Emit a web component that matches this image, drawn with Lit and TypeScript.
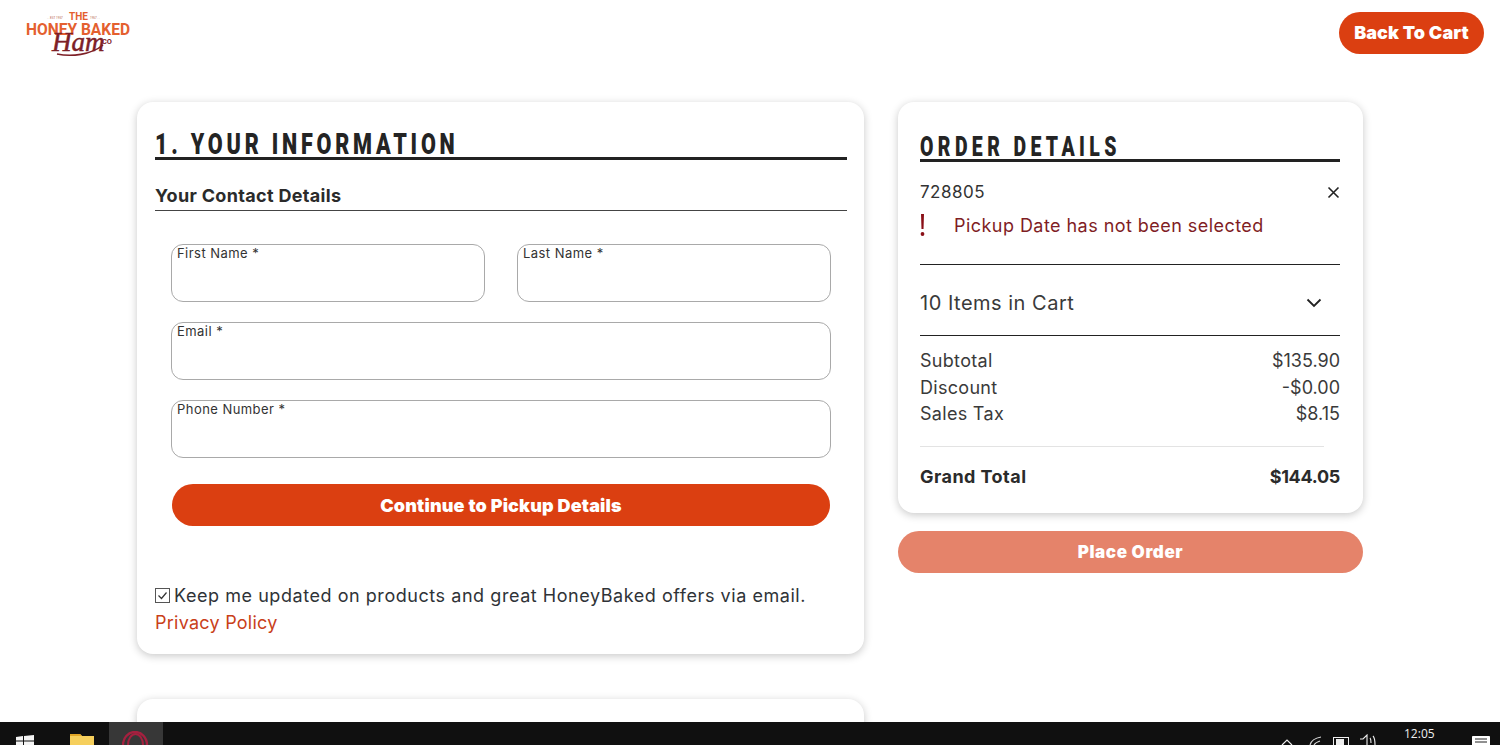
import { LitElement, html, css } from "lit";
import { customElement } from "lit/decorators.js";

@customElement("app-root")
export class AppRoot extends LitElement {
  static styles = css`
    :host { display: flex; flex-direction: column; width: 1500px; height: 745px; overflow: hidden; background: #fff; font-family: Inter, "Liberation Sans", sans-serif; color: #2b2b2b; }
    * { box-sizing: border-box; }
    .page { flex: 1; min-height: 0; overflow: hidden; }
    header { height: 102px; display: flex; justify-content: space-between; align-items: flex-start; padding: 12px 16px 0 25px; }
    .logo { width: 106px; height: 46px; display: block; overflow: visible; }
    .logo text { font-family: Roboto, "Liberation Sans", sans-serif; font-weight: 700; fill: #e4602f; }
    .logo .ham { font-family: "Liberation Serif", serif; font-style: italic; fill: #7d2027; stroke: #7d2027; stroke-width: .5px; font-size: 27px; font-weight: 400; }
    .logo .small { font-size: 3px; font-weight: 400; fill: #b5614a; }
    .logo .co { font-size: 7px; fill: #7d2027; }
    .btn { border: 0; display: flex; align-items: center; justify-content: center; color: #fff; font-family: inherit; font-weight: 900; background: #db3f11; }
    .back { width: 145px; height: 42px; border-radius: 21px; padding-bottom: 2px; font-size: 18px; letter-spacing: .1px; }
    .grid { display: flex; align-items: flex-start; gap: 34px; padding-left: 137px; }
    .left { width: 727px; display: flex; flex-direction: column; gap: 45px; }
    .right { width: 465px; }
    .card { background: #fff; border-radius: 16px; box-shadow: 0 2px 8px rgba(0,0,0,.22); }
    .info { height: 552px; padding: 26px 17px 0 18px; }
    .stub { height: 60px; }
    h2 { margin: 0; font-family: Roboto, "Liberation Sans", sans-serif; font-weight: 900; color: #242424; border-bottom: 3px solid #222; white-space: nowrap; }
    h2 span { display: inline-block; transform-origin: left bottom; }
    .info h2 { font-size: 30px; line-height: 31px; height: 32px; }
    .info h2 span { letter-spacing: 5.25px; transform: scaleX(.72); }
    h3 { margin: 24px 0 0; font-size: 18px; font-weight: 700; line-height: 24px; height: 27px; letter-spacing: .33px; border-bottom: 1px solid #444; color: #2b2b2b; }
    .fields { padding: 33px 16px 0; display: grid; grid-template-columns: 314px 314px; gap: 20px 32px; }
    .field { height: 58px; border: 1px solid #a9a9a9; border-radius: 12px; padding: 0 5px; font-size: 13px; line-height: 16px; letter-spacing: .45px; color: #333; }
    .wide { grid-column: 1 / 3; }
    .cont { width: 658px; height: 42px; margin: 26px 0 0 17px; border-radius: 21px; font-size: 18px; letter-spacing: .15px; }
    .opt { margin-top: 56px; font-size: 18px; line-height: 27px; color: #2f3337; }
    .opt .row { display: flex; align-items: center; gap: 4px; letter-spacing: .55px; }
    .check { width: 15px; height: 15px; display: block; }
    .opt a { color: #c9401a; text-decoration: none; display: block; letter-spacing: .25px; }
    .details { height: 411px; padding: 28px 23px 0 22px; }
    .details h2 { font-size: 27px; line-height: 35px; height: 32px; }
    .details h2 span { letter-spacing: 6.1px; transform: scaleX(.72); }
    .id { display: flex; justify-content: space-between; align-items: center; margin-top: 18px; font-size: 17px; line-height: 24px; letter-spacing: .5px; color: #333; }
    .x { width: 13px; height: 13px; display: block; }
    .err { display: flex; align-items: center; margin-top: 8px; height: 26px; font-size: 18px; letter-spacing: .45px; color: #7f1d24; }
    .bang { width: 34px; font-size: 0; }
    .bang svg { display: block; width: 5px; height: 24px; }
    .sep { border-top: 1px solid #222; }
    .sep.a { margin-top: 26px; }
    .items { height: 70px; padding-top: 6px; display: flex; justify-content: space-between; align-items: center; font-size: 20px; letter-spacing: .5px; color: #3a3a3a; padding-right: 18px; }
    .chev { width: 16px; height: 10px; display: block; }
    .lines { padding-top: 12px; font-size: 18px; line-height: 26.5px; color: #3a3a3a; }
    .line { display: flex; justify-content: space-between; }
    .line span:first-child { letter-spacing: .3px; }
    .thin { border-top: 1px solid #e3e3e3; margin: 18px 16px 0 0; }
    .total { display: flex; justify-content: space-between; margin-top: 17px; font-weight: 700; font-size: 18px; line-height: 26px; color: #2b2b2b; }
    .total span:first-child { letter-spacing: .45px; }
    .total span:last-child { letter-spacing: -.3px; }
    .place { width: 465px; height: 42px; margin-top: 18px; border-radius: 21px; background: #e5836a; font-size: 17px; letter-spacing: .6px; }
    .taskbar { height: 23px; flex: none; background: #101010; position: relative; overflow: hidden; color: #fff; }
    .task { position: absolute; top: 0; }
    .opera { left: 109px; width: 54px; height: 23px; background: #373737; }
    .opera svg { position: absolute; left: 13px; top: 9px; }
    .clock { left: 1404px; top: 4px; font-family: "Open Sans", sans-serif; font-size: 12px; line-height: 16px; color: #eee; }
  `;

  render() {
    return html`
      <div class="page">
        <header>
          <svg class="logo" viewBox="0 0 106 46" role="img">
            <text class="small" x="22" y="7">. . EST 1957</text>
            <text x="44" y="8" font-size="11" textLength="19" lengthAdjust="spacingAndGlyphs">THE</text>
            <text class="small" x="65" y="7">1957 . .</text>
            <text x="1" y="23" font-size="16.5" textLength="104" lengthAdjust="spacingAndGlyphs">HONEY BAKED</text>
            <text class="ham" x="27" y="39">Ham</text>
            <text class="co" x="77" y="32" textLength="10" lengthAdjust="spacingAndGlyphs">CO</text>
            <path d="M32 42c14 3 34 1 46-9" fill="none" stroke="#7d2027" stroke-width="1.6"/>
          </svg>
          <button class="btn back">Back To Cart</button>
        </header>
        <div class="grid">
          <div class="left">
            <section class="card info">
              <h2><span>1. YOUR INFORMATION</span></h2>
              <h3>Your Contact Details</h3>
              <div class="fields">
                <div class="field">First Name *</div>
                <div class="field">Last Name *</div>
                <div class="field wide">Email *</div>
                <div class="field wide">Phone Number *</div>
              </div>
              <button class="btn cont">Continue to Pickup Details</button>
              <div class="opt">
                <div class="row">
                  <svg class="check" viewBox="0 0 15 15"><rect x=".5" y=".5" width="14" height="14" fill="#fff" stroke="#555"/><path d="M3.5 7.5l3 3 5-6" fill="none" stroke="#333" stroke-width="1.2"/></svg>
                  <span>Keep me updated on products and great HoneyBaked offers via email.</span>
                </div>
                <a>Privacy Policy</a>
              </div>
            </section>
            <section class="card stub"></section>
          </div>
          <div class="right">
            <section class="card details">
              <h2><span>ORDER DETAILS</span></h2>
              <div class="id"><span>728805</span><svg class="x" viewBox="0 0 13 13"><path d="M1.5 1.5l10 10M11.5 1.5l-10 10" stroke="#222" stroke-width="1.6"/></svg></div>
              <div class="err"><span class="bang"><svg viewBox="0 0 5 24"><path d="M1 1h3l-.5 15h-2z" fill="#8a0f17"/><circle cx="2.5" cy="21" r="1.9" fill="#8a0f17"/></svg></span>Pickup Date has not been selected</div>
              <div class="sep a"></div>
              <div class="items"><span>10 Items in Cart</span><svg class="chev" viewBox="0 0 16 10"><path d="M1.5 1.5L8 8l6.5-6.5" fill="none" stroke="#222" stroke-width="1.8"/></svg></div>
              <div class="sep"></div>
              <div class="lines">
                <div class="line"><span>Subtotal</span><span>$135.90</span></div>
                <div class="line"><span>Discount</span><span>-$0.00</span></div>
                <div class="line"><span>Sales Tax</span><span>$8.15</span></div>
              </div>
              <div class="thin"></div>
              <div class="total"><span>Grand Total</span><span>$144.05</span></div>
            </section>
            <button class="btn place">Place Order</button>
          </div>
        </div>
      </div>
      <footer class="taskbar">
        <svg class="task" style="left:16px;top:13px" width="18" height="10" viewBox="0 0 18 10"><path d="M0 2l7-1v9H0zM8 1l10-1v10H8z" fill="#f4f4f4"/><path d="M0 6h18" stroke="#101010"/></svg>
        <svg class="task" style="left:70px;top:11px" width="24" height="12" viewBox="0 0 24 12"><path d="M0 1h10l2 2h12v9H0z" fill="#f6cf5c"/><path d="M0 1h10l2 2H0z" fill="#e0a526"/></svg>
        <div class="task opera"><svg width="28" height="14" viewBox="0 0 28 14"><ellipse cx="13" cy="14" rx="12" ry="13" fill="none" stroke="#a5203f" stroke-width="2.4"/><ellipse cx="13.5" cy="14" rx="7.5" ry="11" fill="none" stroke="#a5203f" stroke-width="2"/></svg></div>
        <svg class="task" style="left:1281px;top:16px" width="12" height="7" viewBox="0 0 12 7"><path d="M1 7l5-5 5 5" fill="none" stroke="#eee" stroke-width="1.2"/></svg>
        <svg class="task" style="left:1309px;top:14px" width="14" height="9" viewBox="0 0 14 9"><path d="M1 9c1-4 5-7 11-8M5 9c1-2 3-3 6-4" fill="none" stroke="#ddd" stroke-width="1.1"/></svg>
        <svg class="task" style="left:1333px;top:15px" width="16" height="8" viewBox="0 0 16 8"><rect x=".5" y=".5" width="15" height="10" fill="none" stroke="#eee"/><rect x="3" y="2" width="8" height="6" fill="#eee"/></svg>
        <svg class="task" style="left:1359px;top:12px" width="18" height="11" viewBox="0 0 18 11"><path d="M1 5h3l4-4v10M11 4c1 1 1 3 1 5M14 2c2 2 2 6 2 9" fill="none" stroke="#eee" stroke-width="1.1"/></svg>
        <div class="task clock">12:05</div>
        <svg class="task" style="left:1472px;top:14px" width="18" height="9" viewBox="0 0 18 9"><path d="M.5 9V.5h17V9" fill="#fff" stroke="#fff"/><path d="M3 3h12M3 6h12" stroke="#222"/></svg>
      </footer>
    `;
  }
}
